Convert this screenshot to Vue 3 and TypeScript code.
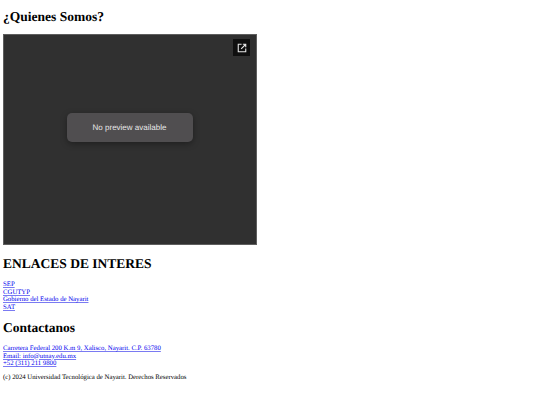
<script setup lang="ts">
const links: string[] = ['SEP', 'CGUTYP', 'Gobierno del Estado de Nayarit', 'SAT']
const contacts: string[] = [
  'Carretera Federal 200 K.m 9, Xalisco, Nayarit. C.P. 63780',
  'Email: info@utnay.edu.mx',
  '+52 (311) 211 9800'
]
</script>

<template>
  <div class="page">
    <h1 class="title">¿Quienes Somos?</h1>
    <div class="frame">
      <div class="open">
        <svg width="10" height="10" viewBox="0 0 24 24" fill="none" stroke="#e8e8e8" stroke-width="2.6">
          <path d="M11 3H3v18h18v-8" />
          <path d="M14 3h7v7M21 3 10 14" />
        </svg>
      </div>
      <div class="notice">No preview available</div>
    </div>
    <h2 class="heading first">ENLACES DE INTERES</h2>
    <div class="links">
      <a v-for="l in links" :key="l" href="#">{{ l }}</a>
    </div>
    <h2 class="heading second">Contactanos</h2>
    <div class="links">
      <a v-for="c in contacts" :key="c" href="#">{{ c }}</a>
    </div>
    <p class="copy">(c) 2024 Universidad Tecnológica de Nayarit. Derechos Reservados</p>
  </div>
</template>

<style scoped>
.page {
  padding: 9px 3px 0;
  font-family: "Liberation Serif", serif;
  font-size: 6.75px;
  line-height: 7.5px;
  color: #000;
  text-rendering: geometricPrecision;
}
.title {
  margin: 0;
  font-size: 13.5px;
  line-height: 16px;
  font-weight: 700;
}
.frame {
  margin-top: 9px;
  width: 254px;
  height: 211px;
  box-sizing: border-box;
  background: #303030;
  border: 1px solid #5e5e5e;
  display: flex;
  align-items: center;
  justify-content: center;
  position: relative;
}
.open {
  position: absolute;
  top: 4px;
  right: 6px;
  width: 17px;
  height: 17px;
  background: #0f0f0f;
  display: flex;
  align-items: center;
  justify-content: center;
}
.notice {
  width: 126px;
  height: 29px;
  margin-bottom: 24px;
  margin-right: 1px;
  border-radius: 5px;
  background: #504e50;
  box-shadow: 0 2px 6px rgba(0, 0, 0, 0.35);
  color: #e8e8e8;
  font-family: "Liberation Sans", sans-serif;
  font-size: 8px;
  display: flex;
  align-items: center;
  justify-content: center;
}
.heading {
  margin: 0;
  font-size: 13.5px;
  line-height: 16px;
  font-weight: 700;
}
.first {
  margin-top: 11px;
}
.second {
  margin-top: 9px;
}
.links {
  margin-top: 9px;
  display: flex;
  flex-direction: column;
  align-items: flex-start;
}
.links a {
  color: #0000ee;
  text-decoration: underline;
  text-decoration-color: #7a7af2;
}
.copy {
  margin: 6px 0 0;
}
</style>
